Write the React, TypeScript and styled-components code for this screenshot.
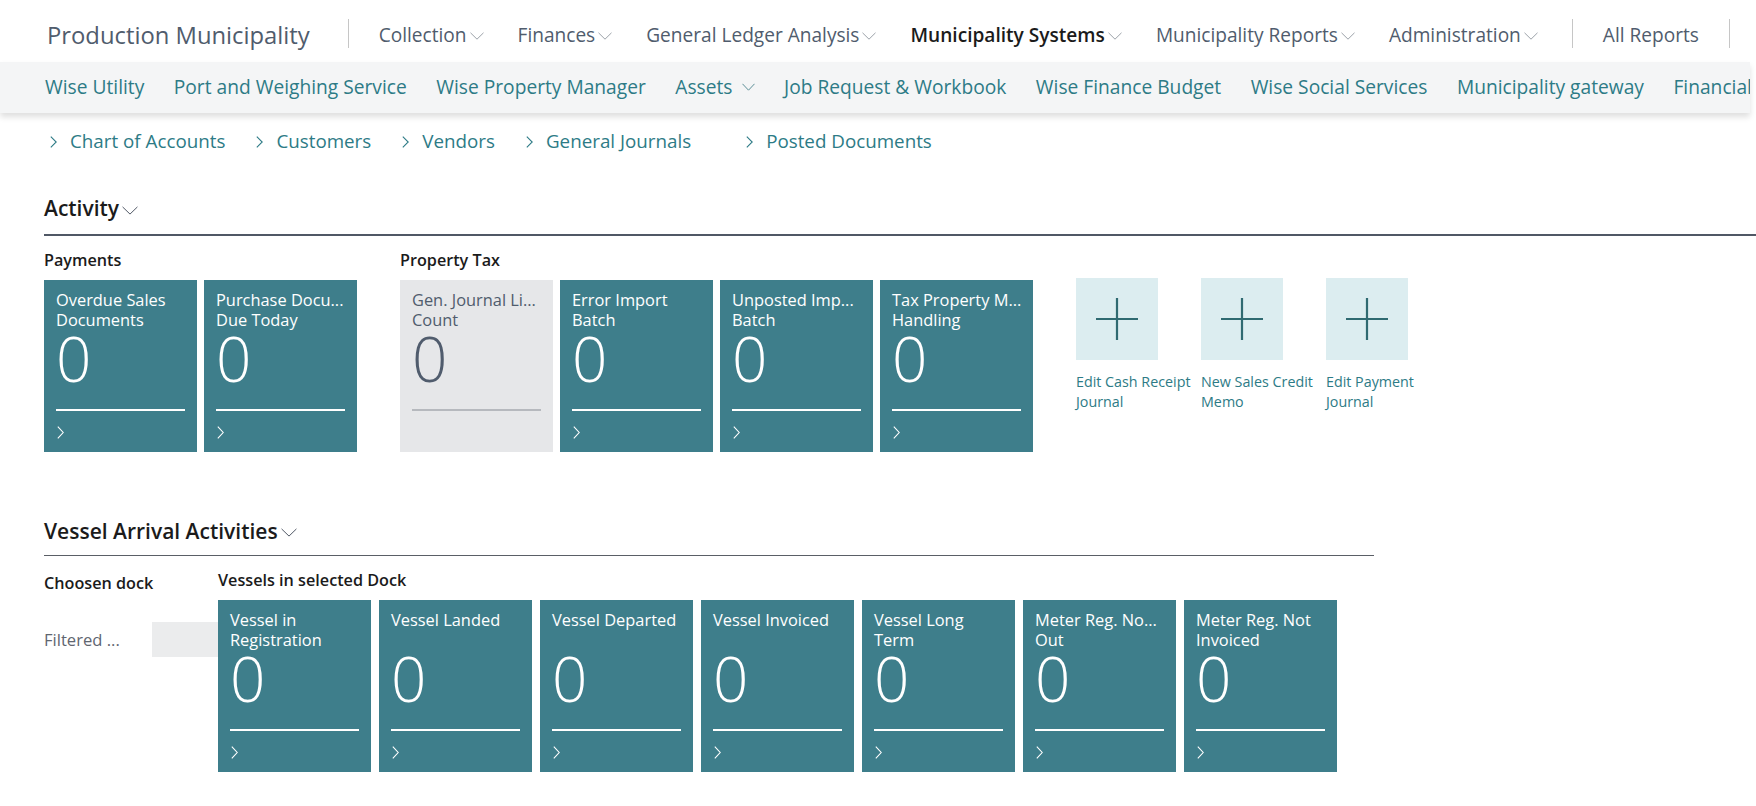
import React from 'react';
import styled, { createGlobalStyle } from 'styled-components';

const GlobalStyle = createGlobalStyle`
  html, body {
    margin: 0;
    padding: 0;
    background: #ffffff;
  }
  body {
    font-family: "Open Sans", "Noto Sans", Arial, sans-serif;
    color: #212121;
    overflow: hidden;
  }
  * {
    box-sizing: border-box;
  }
`;

const DownChevron = ({ width = 14, height = 8 }: { width?: number; height?: number }) => (
    <svg width={width} height={height} viewBox="0 0 14 8" fill="none" preserveAspectRatio="none">
        <path d="M0.5 0.8L7 7.2L13.5 0.8" stroke="currentColor" strokeWidth="1" vectorEffect="non-scaling-stroke" />
    </svg>
);

const RightChevron = ({ height = 13 }: { height?: number }) => (
    <svg width={7} height={height} viewBox="0 0 7 13" fill="none" preserveAspectRatio="none">
        <path d="M0.8 0.6L6.2 6.5L0.8 12.4" stroke="currentColor" strokeWidth="1.1" vectorEffect="non-scaling-stroke" />
    </svg>
);

const PlusIcon = () => (
    <svg width={42} height={42} viewBox="0 0 42 42" fill="none">
        <path d="M21 0V42M0 21H42" stroke="currentColor" strokeWidth="2.2" />
    </svg>
);

type TileData = {
    lines: string[];
    count: number;
    muted?: boolean;
};

const menu = [
    { label: 'Collection' },
    { label: 'Finances' },
    { label: 'General Ledger Analysis' },
    { label: 'Municipality Systems', active: true },
    { label: 'Municipality Reports' },
    { label: 'Administration' },
];

const subNav = [
    { label: 'Wise Utility' },
    { label: 'Port and Weighing Service' },
    { label: 'Wise Property Manager' },
    { label: 'Assets', dropdown: true },
    { label: 'Job Request & Workbook' },
    { label: 'Wise Finance Budget' },
    { label: 'Wise Social Services' },
    { label: 'Municipality gateway' },
    { label: 'Financial' },
];

const links = [
    { label: 'Chart of Accounts' },
    { label: 'Customers' },
    { label: 'Vendors' },
    { label: 'General Journals', wide: true },
    { label: 'Posted Documents' },
];

const payments: TileData[] = [
    { lines: ['Overdue Sales', 'Documents'], count: 0 },
    { lines: ['Purchase Docu...', 'Due Today'], count: 0 },
];

const propertyTax: TileData[] = [
    { lines: ['Gen. Journal Li...', 'Count'], count: 0, muted: true },
    { lines: ['Error Import', 'Batch'], count: 0 },
    { lines: ['Unposted Imp...', 'Batch'], count: 0 },
    { lines: ['Tax Property M...', 'Handling'], count: 0 },
];

const actions = [
    ['Edit Cash Receipt', 'Journal'],
    ['New Sales Credit', 'Memo'],
    ['Edit Payment', 'Journal'],
];

const vessels: TileData[] = [
    { lines: ['Vessel in', 'Registration'], count: 0 },
    { lines: ['Vessel Landed'], count: 0 },
    { lines: ['Vessel Departed'], count: 0 },
    { lines: ['Vessel Invoiced'], count: 0 },
    { lines: ['Vessel Long', 'Term'], count: 0 },
    { lines: ['Meter Reg. No...', 'Out'], count: 0 },
    { lines: ['Meter Reg. Not', 'Invoiced'], count: 0 },
];

const CueTile = ({ tile }: { tile: TileData }) => (
    <Tile $muted={tile.muted}>
        <TileTitle>
            {tile.lines.map((line) => (
                <TileTitleLine key={line}>{line}</TileTitleLine>
            ))}
        </TileTitle>
        <TileCount>{tile.count}</TileCount>
        <TileRule $muted={tile.muted} />
        {!tile.muted && (
            <TileLink>
                <RightChevron />
            </TileLink>
        )}
    </Tile>
);

export default function App() {
    return (
        <Page>
            <GlobalStyle />
            <TopBar>
                <AppTitle>Production Municipality</AppTitle>
                <Divider />
                {menu.map((item) => (
                    <MenuItem key={item.label} $active={item.active}>
                        {item.label}
                        <DownChevron />
                    </MenuItem>
                ))}
                <Divider />
                <MenuItem $plain>All Reports</MenuItem>
                <Divider />
            </TopBar>

            <SubNav>
                {subNav.map((item) => (
                    <SubNavItem key={item.label}>
                        {item.label}
                        {item.dropdown && (
                            <SubNavCaret>
                                <DownChevron width={13} />
                            </SubNavCaret>
                        )}
                    </SubNavItem>
                ))}
            </SubNav>

            <Content>
                <LinkRow>
                    {links.map((link) => (
                        <QuickLink key={link.label} $wide={link.wide}>
                            <RightChevron height={12} />
                            <span>{link.label}</span>
                        </QuickLink>
                    ))}
                </LinkRow>

                <ActivitySection>
                    <SectionHeading>
                        Activity
                        <HeadingCaret>
                            <DownChevron width={16} height={9} />
                        </HeadingCaret>
                    </SectionHeading>
                    <Groups>
                        <Group>
                            <GroupLabel>Payments</GroupLabel>
                            <TileRow>
                                {payments.map((tile) => (
                                    <CueTile key={tile.lines[0]} tile={tile} />
                                ))}
                            </TileRow>
                        </Group>
                        <Group>
                            <GroupLabel>Property Tax</GroupLabel>
                            <TileRow>
                                {propertyTax.map((tile) => (
                                    <CueTile key={tile.lines[0]} tile={tile} />
                                ))}
                            </TileRow>
                        </Group>
                        <ActionGroup>
                            {actions.map((lines) => (
                                <ActionItem key={lines[0]}>
                                    <ActionTile>
                                        <PlusIcon />
                                    </ActionTile>
                                    <ActionLabel>
                                        {lines.map((line) => (
                                            <div key={line}>{line}</div>
                                        ))}
                                    </ActionLabel>
                                </ActionItem>
                            ))}
                        </ActionGroup>
                    </Groups>
                </ActivitySection>

                <VesselSection>
                    <SectionHeading $thin>
                        Vessel Arrival Activities
                        <HeadingCaret>
                            <DownChevron width={16} height={9} />
                        </HeadingCaret>
                    </SectionHeading>
                    <VesselBody>
                        <DockPanel>
                            <DockLabel>Choosen dock</DockLabel>
                            <FilterRow>
                                <FilterText>Filtered ...</FilterText>
                                <FilterBox />
                            </FilterRow>
                        </DockPanel>
                        <VesselPanel>
                            <GroupLabel>Vessels in selected Dock</GroupLabel>
                            <TileRow $gap={8}>
                                {vessels.map((tile) => (
                                    <CueTile key={tile.lines[0]} tile={tile} />
                                ))}
                            </TileRow>
                        </VesselPanel>
                    </VesselBody>
                </VesselSection>
            </Content>
        </Page>
    );
}

const Page = styled.div`
  width: 100%;
  min-height: 806px;
  background: #ffffff;
`;

const TopBar = styled.header`
  height: 62px;
  display: flex;
  align-items: center;
  padding: 8px 0 0 47px;
  white-space: nowrap;
`;

const AppTitle = styled.div`
  font-size: 23.8px;
  color: #505c6d;
  margin-right: 38px;
  flex-shrink: 0;
`;

const Divider = styled.span`
  width: 1px;
  height: 29px;
  flex-shrink: 0;
  background: #c6c6c6;
  margin-right: 30px;
  margin-top: -4px;
`;

const MenuItem = styled.div<{ $active?: boolean; $plain?: boolean }>`
  display: flex;
  align-items: center;
  flex-shrink: 0;
  font-size: 19.1px;
  color: ${(p) => (p.$active ? '#1b1b1b' : '#505c6d')};
  font-weight: ${(p) => (p.$active ? 600 : 400)};
  margin-right: ${(p) => (p.$plain ? '30px' : '34px')};

  svg {
    margin-left: 3px;
    margin-top: 2px;
    color: #9ba1a8;
  }
`;

const SubNav = styled.nav`
  height: 51px;
  margin-right: 6px;
  padding: 0 0 3px 45px;
  background: #f4f5f6;
  box-shadow: 0 4px 6px rgba(0, 0, 0, 0.13);
  display: flex;
  align-items: center;
  gap: 29.5px;
  overflow: hidden;
  white-space: nowrap;
  position: relative;
`;

const SubNavItem = styled.div`
  display: flex;
  align-items: center;
  font-size: 19.2px;
  color: #2d7b86;
  flex-shrink: 0;
`;

const SubNavCaret = styled.span`
  display: flex;
  margin-left: 9px;
  margin-top: 2px;
  color: #5d8f97;
`;

const Content = styled.main`
  padding-left: 44px;
`;

const LinkRow = styled.div`
  display: flex;
  align-items: center;
  margin-top: 15px;
  height: 26px;
  padding-left: 6px;
  gap: 31px;
`;

const QuickLink = styled.div<{ $wide?: boolean }>`
  display: flex;
  align-items: center;
  gap: 13px;
  font-size: 18.8px;
  color: #2d7b86;
  margin-right: ${(p) => (p.$wide ? '24px' : '0')};

  svg {
    color: #2d7b86;
    margin-top: 1px;
  }
`;

const ActivitySection = styled.section`
  margin-top: 40px;
`;

const SectionHeading = styled.h2<{ $thin?: boolean }>`
  margin: 0;
  display: flex;
  align-items: center;
  height: ${(p) => (p.$thin ? '40px' : '42px')};
  padding-bottom: ${(p) => (p.$thin ? '10px' : '12px')};
  font-size: 21px;
  font-weight: 600;
  color: #1b1b1b;
  border-bottom: ${(p) => (p.$thin ? '1px solid #5a5f66' : '2px solid #505865')};
`;

const HeadingCaret = styled.span`
  display: flex;
  margin-left: 3px;
  margin-top: 4px;
  color: #505865;
`;

const Groups = styled.div`
  display: flex;
  align-items: flex-start;
  gap: 43px;
  margin-top: 14px;
`;

const Group = styled.div`
  display: flex;
  flex-direction: column;
`;

const GroupLabel = styled.div`
  font-size: 16.2px;
  line-height: 20px;
  font-weight: 600;
  color: #1b1b1b;
  margin-bottom: 10px;
  white-space: nowrap;
`;

const TileRow = styled.div<{ $gap?: number }>`
  display: flex;
  gap: ${(p) => p.$gap ?? 7}px;
`;

const Tile = styled.div<{ $muted?: boolean }>`
  width: 153px;
  height: 172px;
  flex-shrink: 0;
  padding: 10px 12px 0;
  display: flex;
  flex-direction: column;
  background: ${(p) => (p.$muted ? '#e6e7e9' : '#3e7e8b')};
  color: ${(p) => (p.$muted ? '#505c6d' : '#ffffff')};
`;

const TileTitle = styled.div`
  height: 40px;
  font-size: 16.4px;
  line-height: 20px;
`;

const TileTitleLine = styled.div`
  white-space: nowrap;
`;

const TileCount = styled.div`
  height: 56px;
  font-size: 62px;
  font-weight: 300;
  line-height: 56px;
`;

const TileRule = styled.div<{ $muted?: boolean }>`
  height: 2px;
  margin-top: 23px;
  background: ${(p) => (p.$muted ? '#b6b9be' : '#ffffff')};
`;

const TileLink = styled.div`
  display: flex;
  margin-top: 15px;
  padding-left: 1px;
`;

const ActionGroup = styled.div`
  display: flex;
  gap: 43px;
  padding-top: 28px;
`;

const ActionItem = styled.div`
  width: 82px;
  display: flex;
  flex-direction: column;
`;

const ActionTile = styled.div`
  width: 82px;
  height: 82px;
  background: #dcedf0;
  color: #2f6a71;
  display: flex;
  align-items: center;
  justify-content: center;
`;

const ActionLabel = styled.div`
  margin-top: 12px;
  font-size: 14.3px;
  line-height: 20px;
  color: #2d7b86;
  white-space: nowrap;
`;

const VesselSection = styled.section`
  width: 1330px;
  margin-top: 64px;
`;

const VesselBody = styled.div`
  display: flex;
  align-items: flex-start;
`;

const DockPanel = styled.div`
  width: 174px;
  flex-shrink: 0;
  padding-top: 17px;
`;

const DockLabel = styled.div`
  font-size: 16.2px;
  line-height: 20px;
  font-weight: 600;
  color: #1b1b1b;
  white-space: nowrap;
`;

const FilterRow = styled.div`
  display: flex;
  align-items: center;
  height: 35px;
  margin-top: 29px;
`;

const FilterText = styled.div`
  width: 108px;
  font-size: 16.6px;
  color: #5f6670;
  white-space: nowrap;
`;

const FilterBox = styled.div`
  flex: 1;
  height: 35px;
  background: #ebeced;
`;

const VesselPanel = styled.div`
  padding-top: 14px;
`;
